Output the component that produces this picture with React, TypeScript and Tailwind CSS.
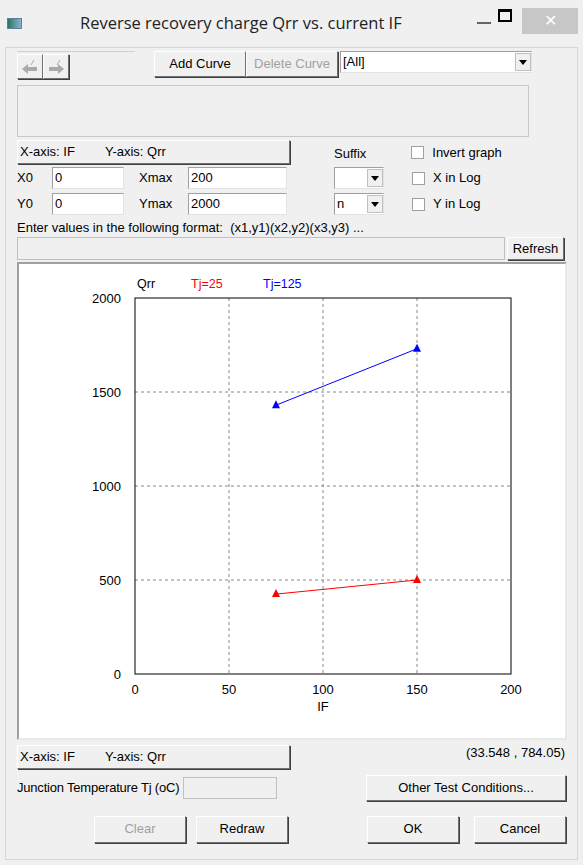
import React from "react";

const F = { fontFamily: '"Liberation Sans", Arial, sans-serif' };
const btn = "flex items-center justify-center bg-[#f0f0f0] border border-t-white border-l-white border-r-[#707070] border-b-[#707070] shadow-[1px_1px_0_#404040] text-[13px]";
const sunken = "bg-white border border-t-[#a0a0a0] border-l-[#a0a0a0] border-r-[#e3e3e3] border-b-[#e3e3e3] text-[13px] px-[2px] flex items-center";

function Combo({ w, text }: { w: string; text: string }) {
  return (
    <div className={`${sunken} ${w} h-[22px] justify-between pr-0`}>
      <span>{text}</span>
      <div className="w-[16px] h-[18px] bg-[#f0f0f0] border border-[#c0c0c0] flex items-center justify-center">
        <svg width="8" height="5"><path d="M0 0h8L4 5z" fill="#000" /></svg>
      </div>
    </div>
  );
}

function Check({ label }: { label: string }) {
  return (
    <div className="flex items-center gap-[8px] text-[13px]">
      <div className="w-[13px] h-[13px] bg-white border border-[#a0a0a0]" />
      <span>{label}</span>
    </div>
  );
}

export default function App() {
  const X = (x: number) => 116 + x * 1.88;
  const Y = (y: number) => 410 - y * 0.188;
  return (
    <div style={F} className="w-[583px] h-[865px] bg-[#f0f0f0] text-black">
      <div className="h-[47px] flex items-center relative">
        <div className="ml-[7px] w-[15px] h-[11px] border border-[#5a7fa0] bg-gradient-to-r from-[#1f7a60] to-[#8fb0d0]" />
        <div className="ml-[58px] text-[16.5px] text-[#222]" style={{ fontFamily: '"Open Sans", sans-serif' }}>Reverse recovery charge Qrr vs. current IF</div>
        <div className="absolute left-[477px] top-[14px] w-[14px] border-t-2 border-[#666] mt-[8px]" />
        <div className="absolute left-[498px] top-[9px] w-[14px] h-[13px] border-2 border-black border-t-[3px]" />
        <div className="absolute left-[522px] top-[8px] w-[56px] h-[26px] bg-[#c7c7c7] flex items-center justify-center text-white text-[16px]">✕</div>
      </div>
      <div className="mx-[5px] h-[813px] border border-[#d6d6d6] px-[11px]">
        <div className="flex items-start mt-[3px] h-[27px]">
          <div className="flex border-t border-[#d0d0d0] pt-[2px] w-[118px]">
            <div className={`${btn} w-[26px] h-[25px] text-[#999]`}>
              <svg width="18" height="16"><path d="M1 10l6-5v3h9v4H7v3z" fill="#aaa" /><path d="M10 6l3-5" stroke="#aaa" /></svg>
            </div>
            <div className={`${btn} w-[26px] h-[25px] text-[#999]`}>
              <svg width="18" height="16"><path d="M17 10l-6-5v3H2v4h9v3z" fill="#aaa" /><path d="M10 6l3-5" stroke="#aaa" /></svg>
            </div>
          </div>
          <div className={`${btn} w-[92px] h-[26px] ml-[19px] text-black`}>Add Curve</div>
          <div className={`${btn} w-[92px] h-[26px] text-[#a0a0a0]`}>Delete Curve</div>
          <Combo w="w-[192px] ml-[2px]" text="[All]" />
        </div>
        <div className="mt-[7px] w-[512px] h-[52px] border border-[#c8c8c8] bg-[#f0f0f0]" />
        <div className="flex mt-[3px] h-[25px]">
          <div className={`${btn} w-[273px] h-[24px] justify-start pl-[2px] text-black`}><span>X-axis: IF</span><span className="ml-[30px]">Y-axis: Qrr</span></div>
          <div className="ml-[44px] text-[13px] mt-[4px]">Suffix</div>
          <div className="ml-[45px] mt-[3px]"><Check label="Invert graph" /></div>
        </div>
        {[["X0", "0", "Xmax", "200", ""], ["Y0", "0", "Ymax", "2000", "n"]].map((r, i) => (
          <div key={i} className="flex items-center h-[26px] text-[13px]">
            <span className="w-[35px]">{r[0]}</span>
            <div className={`${sunken} w-[72px] h-[22px]`}>{r[1]}</div>
            <span className="ml-[15px] w-[49px]">{r[2]}</span>
            <div className={`${sunken} w-[99px] h-[22px]`}>{r[3]}</div>
            <Combo w="w-[50px] ml-[47px]" text={r[4]} />
            <div className="ml-[28px]"><Check label={i === 0 ? "X in Log" : "Y in Log"} /></div>
          </div>
        ))}
        <div className="text-[13px] mt-[3px] leading-[16px]">Enter values in the following format:&nbsp; (x1,y1)(x2,y2)(x3,y3) ...</div>
        <div className="flex items-center mt-[1px]">
          <div className="w-[488px] h-[23px] bg-[#f0f0f0] border border-[#c0c0c0]" />
          <div className={`${btn} w-[57px] h-[23px] ml-[2px] text-black`}>Refresh</div>
        </div>
        <div className="mt-[2px] w-[550px] h-[478px] bg-white border-2 border-t-[#a0a0a0] border-l-[#a0a0a0] border-r-[#e8e8e8] border-b-[#e8e8e8] relative">
          <svg width="546" height="474" className="absolute left-0 top-0" style={F}>
            <text x="118" y="24" fontSize="12.5">Qrr</text>
            <text x="172" y="24" fontSize="12.5" fill="#f00">Tj=25</text>
            <text x="244" y="24" fontSize="12.5" fill="#00f">Tj=125</text>
            {[50, 100, 150].map((v) => (
              <line key={v} x1={X(v)} x2={X(v)} y1={Y(2000)} y2={Y(0)} stroke="#888" strokeDasharray="3 3" />
            ))}
            {[500, 1000, 1500].map((v) => (
              <line key={v} x1={X(0)} x2={X(200)} y1={Y(v)} y2={Y(v)} stroke="#888" strokeDasharray="3 3" />
            ))}
            <rect x={X(0)} y={Y(2000)} width={X(200) - X(0)} height={Y(0) - Y(2000)} fill="none" stroke="#000" />
            {[0, 500, 1000, 1500, 2000].map((v) => (
              <text key={v} x={X(0) - 14} y={Y(v) + 5} fontSize="13" textAnchor="end">{v}</text>
            ))}
            {[0, 50, 100, 150, 200].map((v) => (
              <text key={v} x={X(v)} y={Y(0) + 20} fontSize="13" textAnchor="middle">{v}</text>
            ))}
            <text x={X(100)} y={Y(0) + 37} fontSize="13" textAnchor="middle">IF</text>
            <line x1={X(75)} y1={Y(1430)} x2={X(150)} y2={Y(1730)} stroke="#00f" />
            <line x1={X(75)} y1={Y(425)} x2={X(150)} y2={Y(500)} stroke="#f00" />
            {[[75, 1430, "#00f"], [150, 1730, "#00f"], [75, 425, "#f00"], [150, 500, "#f00"]].map(([x, y, c], i) => (
              <path key={i} d={`M${X(x as number)} ${Y(y as number) - 5}l4 8h-8z`} fill={c as string} />
            ))}
          </svg>
        </div>
        <div className="flex items-center mt-[4px] h-[25px]">
          <div className={`${btn} w-[273px] h-[24px] justify-start pl-[2px] text-black`}><span>X-axis: IF</span><span className="ml-[30px]">Y-axis: Qrr</span></div>
          <div className="ml-auto mr-[1px] text-[13px] -mt-[8px]">(33.548 , 784.05)</div>
        </div>
        <div className="flex items-center mt-[6px] h-[26px]">
          <span className="text-[13px] tracking-[-0.2px]">Junction Temperature Tj (oC)</span>
          <div className="ml-[4px] w-[94px] h-[22px] bg-[#f0f0f0] border border-[#c0c0c0]" />
          <div className={`${btn} w-[200px] h-[26px] ml-auto text-black`}>Other Test Conditions...</div>
        </div>
        <div className="flex items-center mt-[14px] h-[28px]">
          <div className={`${btn} w-[92px] h-[27px] ml-[77px] text-[#a0a0a0]`}>Clear</div>
          <div className={`${btn} w-[92px] h-[27px] ml-[10px] text-black`}>Redraw</div>
          <div className={`${btn} w-[92px] h-[27px] ml-[79px] text-black`}>OK</div>
          <div className={`${btn} w-[92px] h-[27px] ml-[15px] text-black`}>Cancel</div>
        </div>
      </div>
    </div>
  );
}
